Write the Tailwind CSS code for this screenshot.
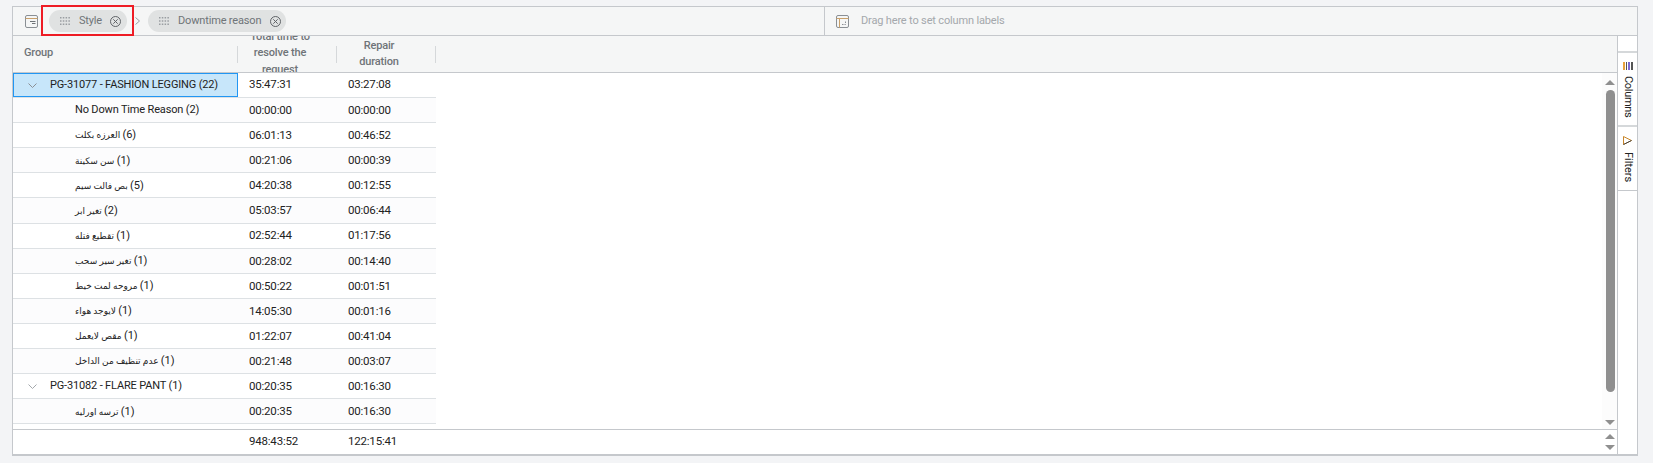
<!DOCTYPE html>
<html lang="en">

<head>
  <meta charset="UTF-8">
  <script src="https://cdn.jsdelivr.net/npm/@tailwindcss/browser@4"></script>
  <title>Downtime pivot</title>
</head>

<body class="bg-[#f3f4f6] h-[463px] overflow-hidden pt-[6px] pl-[12px] font-['Roboto','DejaVu_Sans',sans-serif] text-[11px] tracking-[-0.16px] text-[#222]">
  <div class="relative w-[1626px] h-[450px] border border-[#c5c8cc] border-b-2 bg-white flex flex-col">

    <!-- row group and column label bar -->
    <div class="h-[29px] shrink-0 flex border-b border-[#c5c8cc] bg-[#f5f6f6]">
      <div class="w-[812px] flex items-center pl-[12px] border-r border-[#c5c8cc]">
        <svg class="w-[13px] h-[13px]" viewBox="0 0 13 13" fill="none" stroke="#8a8f94">
          <rect x="0.5" y="0.5" width="12" height="12" rx="1.5" />
          <path d="M0.5 3.5h12" stroke="#c9a06a" />
          <path d="M5 6.500h5.500M7 8.500h3.500" stroke="#6f7478" />
        </svg>
        <div class="ml-[11px] w-[78px] h-[22px] rounded-full bg-[#e0e2e2] flex items-center pl-[11px] text-[#6f7478]">
          <svg class="w-[10px] h-[8px]" viewBox="0 0 10 8" fill="#9a9ea2">
            <path d="M0 0h1.500v1.500H0zM2.800 0h1.500v1.500H2.800zM5.600 0h1.500v1.500H5.600zM8.400 0h1.500v1.500H8.400zM0 3.200h1.500v1.500H0zM2.800 3.200h1.500v1.500H2.800zM5.600 3.200h1.500v1.500H5.600zM8.400 3.200h1.500v1.500H8.400zM0 6.400h1.500v1.500H0zM2.800 6.400h1.500v1.500H2.800zM5.600 6.400h1.500v1.500H5.600zM8.400 6.400h1.500v1.500H8.400z" />
          </svg>
          <span class="ml-[9px]">Style</span>
          <svg class="ml-[8px] w-[11px] h-[11px]" viewBox="0 0 11 11" fill="none" stroke="#5f6367">
            <circle cx="5.500" cy="5.500" r="5" />
            <path d="M3.300 3.300l4.400 4.400M7.700 3.300l-4.400 4.400" />
          </svg>
        </div>
        <svg class="mx-[8px] w-[5px] h-[8px]" viewBox="0 0 5 8" fill="none" stroke="#9a9ea2">
          <path d="M0.500 0.500L4.500 4L0.500 7.500" />
        </svg>
        <div class="w-[138px] h-[22px] rounded-full bg-[#e0e2e2] flex items-center pl-[11px] text-[#6f7478]">
          <svg class="w-[10px] h-[8px]" viewBox="0 0 10 8" fill="#9a9ea2">
            <path d="M0 0h1.500v1.500H0zM2.800 0h1.500v1.500H2.800zM5.600 0h1.500v1.500H5.600zM8.400 0h1.500v1.500H8.400zM0 3.200h1.500v1.500H0zM2.800 3.200h1.500v1.500H2.800zM5.600 3.200h1.500v1.500H5.600zM8.400 3.200h1.500v1.500H8.400zM0 6.400h1.500v1.500H0zM2.800 6.400h1.500v1.500H2.800zM5.600 6.400h1.500v1.500H5.600zM8.400 6.400h1.500v1.500H8.400z" />
          </svg>
          <span class="ml-[9px] whitespace-nowrap">Downtime reason</span>
          <svg class="ml-[9px] w-[11px] h-[11px] shrink-0" viewBox="0 0 11 11" fill="none" stroke="#5f6367">
            <circle cx="5.500" cy="5.500" r="5" />
            <path d="M3.300 3.300l4.400 4.400M7.700 3.300l-4.400 4.400" />
          </svg>
        </div>
      </div>
      <div class="flex-1 flex items-center pl-[11px] text-[#a4a8ac]">
        <svg class="w-[13px] h-[13px]" viewBox="0 0 13 13" fill="none" stroke="#8a8f94">
          <rect x="0.500" y="0.500" width="12" height="12" rx="1.500" />
          <path d="M0.500 3.500h12M3.500 3.500v9" stroke="#c9a06a" />
          <path d="M6 9.500h3.500V6" stroke-dasharray="1.500 1" />
        </svg>
        <span class="ml-[12px]">Drag here to set column labels</span>
      </div>
    </div>

    <div class="flex-1 flex min-h-0">
      <div class="flex-1 flex flex-col min-w-0">

        <!-- column headers -->
        <div class="h-[37px] shrink-0 flex items-center border-b border-[#c5c8cc] bg-[#f5f6f6] font-medium text-[#6f7478] leading-[16.5px]">
          <div class="w-[224px] pl-[11px] mb-[2px]">Group</div>
          <div class="w-[99px] h-[17px] flex items-center justify-center border-l border-[#d5d8da]">
            <div class="w-[99px] h-[36px] shrink-0 flex items-center justify-center text-center overflow-hidden pl-[5px] pr-[19px] mb-[1px]">Total time to resolve the request</div>
          </div>
          <div class="w-[99px] h-[17px] flex items-center justify-center border-l border-[#d5d8da] text-center pl-[13px] pr-[27px]">Repair duration</div>
          <div class="h-[17px] border-l border-[#d5d8da]"></div>
        </div>

        <!-- rows -->
        <div class="flex-1 min-h-0 flex overflow-hidden">
          <div class="w-[423px] shrink-0 overflow-hidden">
            <div class="h-[25.1px] flex items-center border-b border-[#dde1e4] bg-white">
              <div class="w-[225px] shrink-0 h-full flex items-center pl-[14px] bg-[#c7e6fa] border border-[#2196f3]">
                <svg class="w-[9px] h-[5px]" viewBox="0 0 9 5" fill="none" stroke="#8a8f94"><path d="M0.500 0.500L4.500 4.500L8.500 0.500" /></svg>
                <span class="ml-[13px] whitespace-nowrap">PG-31077 - FASHION LEGGING (22)</span>
              </div>
              <div class="w-[99px] pl-[11px] text-[11.5px] tracking-[-0.2px]">35:47:31</div>
              <div class="w-[99px] pl-[11px] text-[11.5px] tracking-[-0.2px]">03:27:08</div>
            </div>
            <div class="h-[25.1px] pt-[1px] flex items-center border-b border-[#dde1e4] bg-[#fcfcfd]">
              <div class="w-[225px] pl-[62px]">No Down Time Reason (2)</div>
              <div class="w-[99px] pl-[11px] text-[11.5px] tracking-[-0.2px]">00:00:00</div>
              <div class="w-[99px] pl-[11px] text-[11.5px] tracking-[-0.2px]">00:00:00</div>
            </div>
            <div class="h-[25.1px] pt-[1px] flex items-center border-b border-[#dde1e4] bg-white">
              <div class="w-[225px] pl-[62px] text-[9px]"><span dir="rtl">العرزه بكلت</span> <span class="text-[11px]">(6)</span></div>
              <div class="w-[99px] pl-[11px] text-[11.5px] tracking-[-0.2px]">06:01:13</div>
              <div class="w-[99px] pl-[11px] text-[11.5px] tracking-[-0.2px]">00:46:52</div>
            </div>
            <div class="h-[25.1px] pt-[1px] flex items-center border-b border-[#dde1e4] bg-[#fcfcfd]">
              <div class="w-[225px] pl-[62px] text-[9px]"><span dir="rtl">سن سكينة</span> <span class="text-[11px]">(1)</span></div>
              <div class="w-[99px] pl-[11px] text-[11.5px] tracking-[-0.2px]">00:21:06</div>
              <div class="w-[99px] pl-[11px] text-[11.5px] tracking-[-0.2px]">00:00:39</div>
            </div>
            <div class="h-[25.1px] pt-[1px] flex items-center border-b border-[#dde1e4] bg-white">
              <div class="w-[225px] pl-[62px] text-[9px]"><span dir="rtl">بص فالت سيم</span> <span class="text-[11px]">(5)</span></div>
              <div class="w-[99px] pl-[11px] text-[11.5px] tracking-[-0.2px]">04:20:38</div>
              <div class="w-[99px] pl-[11px] text-[11.5px] tracking-[-0.2px]">00:12:55</div>
            </div>
            <div class="h-[25.1px] pt-[1px] flex items-center border-b border-[#dde1e4] bg-[#fcfcfd]">
              <div class="w-[225px] pl-[62px] text-[9px]"><span dir="rtl">تغير ابر</span> <span class="text-[11px]">(2)</span></div>
              <div class="w-[99px] pl-[11px] text-[11.5px] tracking-[-0.2px]">05:03:57</div>
              <div class="w-[99px] pl-[11px] text-[11.5px] tracking-[-0.2px]">00:06:44</div>
            </div>
            <div class="h-[25.1px] pt-[1px] flex items-center border-b border-[#dde1e4] bg-white">
              <div class="w-[225px] pl-[62px] text-[9px]"><span dir="rtl">تقطيع فتله</span> <span class="text-[11px]">(1)</span></div>
              <div class="w-[99px] pl-[11px] text-[11.5px] tracking-[-0.2px]">02:52:44</div>
              <div class="w-[99px] pl-[11px] text-[11.5px] tracking-[-0.2px]">01:17:56</div>
            </div>
            <div class="h-[25.1px] pt-[1px] flex items-center border-b border-[#dde1e4] bg-[#fcfcfd]">
              <div class="w-[225px] pl-[62px] text-[9px]"><span dir="rtl">تغير سير سحب</span> <span class="text-[11px]">(1)</span></div>
              <div class="w-[99px] pl-[11px] text-[11.5px] tracking-[-0.2px]">00:28:02</div>
              <div class="w-[99px] pl-[11px] text-[11.5px] tracking-[-0.2px]">00:14:40</div>
            </div>
            <div class="h-[25.1px] pt-[1px] flex items-center border-b border-[#dde1e4] bg-white">
              <div class="w-[225px] pl-[62px] text-[9px]"><span dir="rtl">مروحه لمت خيط</span> <span class="text-[11px]">(1)</span></div>
              <div class="w-[99px] pl-[11px] text-[11.5px] tracking-[-0.2px]">00:50:22</div>
              <div class="w-[99px] pl-[11px] text-[11.5px] tracking-[-0.2px]">00:01:51</div>
            </div>
            <div class="h-[25.1px] pt-[1px] flex items-center border-b border-[#dde1e4] bg-[#fcfcfd]">
              <div class="w-[225px] pl-[62px] text-[9px]"><span dir="rtl">لايوجد هواء</span> <span class="text-[11px]">(1)</span></div>
              <div class="w-[99px] pl-[11px] text-[11.5px] tracking-[-0.2px]">14:05:30</div>
              <div class="w-[99px] pl-[11px] text-[11.5px] tracking-[-0.2px]">00:01:16</div>
            </div>
            <div class="h-[25.1px] pt-[1px] flex items-center border-b border-[#dde1e4] bg-white">
              <div class="w-[225px] pl-[62px] text-[9px]"><span dir="rtl">مقص لايعمل</span> <span class="text-[11px]">(1)</span></div>
              <div class="w-[99px] pl-[11px] text-[11.5px] tracking-[-0.2px]">01:22:07</div>
              <div class="w-[99px] pl-[11px] text-[11.5px] tracking-[-0.2px]">00:41:04</div>
            </div>
            <div class="h-[25.1px] pt-[1px] flex items-center border-b border-[#dde1e4] bg-[#fcfcfd]">
              <div class="w-[225px] pl-[62px] text-[9px]"><span dir="rtl">عدم تنظيف من الداخل</span> <span class="text-[11px]">(1)</span></div>
              <div class="w-[99px] pl-[11px] text-[11.5px] tracking-[-0.2px]">00:21:48</div>
              <div class="w-[99px] pl-[11px] text-[11.5px] tracking-[-0.2px]">00:03:07</div>
            </div>
            <div class="h-[25.1px] pt-[1px] flex items-center border-b border-[#dde1e4] bg-white">
              <div class="w-[225px] shrink-0 flex items-center pl-[15px]">
                <svg class="w-[9px] h-[5px]" viewBox="0 0 9 5" fill="none" stroke="#a4a8ac"><path d="M0.500 0.500L4.500 4.500L8.500 0.500" /></svg>
                <span class="ml-[13px] whitespace-nowrap">PG-31082 - FLARE PANT (1)</span>
              </div>
              <div class="w-[99px] pl-[11px] text-[11.5px] tracking-[-0.2px]">00:20:35</div>
              <div class="w-[99px] pl-[11px] text-[11.5px] tracking-[-0.2px]">00:16:30</div>
            </div>
            <div class="h-[25.1px] pt-[1px] flex items-center border-b border-[#dde1e4] bg-[#fcfcfd]">
              <div class="w-[225px] pl-[62px] text-[9px]"><span dir="rtl">ترسه اورليه</span> <span class="text-[11px]">(1)</span></div>
              <div class="w-[99px] pl-[11px] text-[11.5px] tracking-[-0.2px]">00:20:35</div>
              <div class="w-[99px] pl-[11px] text-[11.5px] tracking-[-0.2px]">00:16:30</div>
            </div>
            <div class="h-[6px] bg-white"></div>
          </div>

          <!-- vertical scrollbar -->
          <div class="ml-auto w-[15px] bg-[#fcfcfc] flex flex-col items-center pt-[7px] pb-[4px] pl-[1px]">
            <div class="w-0 h-0 border-x-[5px] border-x-transparent border-b-[5px] border-b-[#8f8f8f]"></div>
            <div class="mt-[5px] w-[9px] h-[302px] rounded-full bg-[#8f8f8f]"></div>
            <div class="mt-auto w-0 h-0 border-x-[5px] border-x-transparent border-t-[5px] border-t-[#8f8f8f]"></div>
          </div>
        </div>

        <!-- totals -->
        <div class="h-[25px] shrink-0 flex border-t border-[#c5c8cc] bg-white text-[11.5px] tracking-[-0.2px]">
          <div class="w-[423px] flex items-center">
            <div class="w-[225px]"></div>
            <div class="w-[99px] pl-[11px]">948:43:52</div>
            <div class="w-[99px] pl-[11px]">122:15:41</div>
          </div>
          <div class="ml-auto w-[15px] flex flex-col items-center justify-between py-[4px] pl-[1px]">
            <div class="w-0 h-0 border-x-[5px] border-x-transparent border-b-[5px] border-b-[#8f8f8f]"></div>
            <div class="w-0 h-0 border-x-[5px] border-x-transparent border-t-[5px] border-t-[#8f8f8f]"></div>
          </div>
        </div>
      </div>

      <!-- side tabs -->
      <div class="w-[20px] shrink-0 border-l border-[#c5c8cc] bg-white pt-[15px] text-[#222] tracking-normal">
        <div class="h-[76px] border-y-2 border-[#d5d8da] flex flex-col items-center pt-[9px]">
          <svg class="w-[10px] h-[8px]" viewBox="0 0 10 8">
            <path d="M0 0h2v8H0z" fill="#e8a33d" />
            <path d="M3 0h1v8H3z" fill="#555" />
            <path d="M5 0h2v8H5z" fill="#7c6bd6" />
            <path d="M8 0h2v8H8z" fill="#555" />
          </svg>
          <span class="mt-[6px] tracking-[-0.3px] [writing-mode:vertical-rl]">Columns</span>
        </div>
        <div class="h-[64px] border-b border-[#c5c8cc] flex flex-col items-center pt-[9px]">
          <svg class="w-[9px] h-[9px]" viewBox="0 0 9 9" fill="none">
            <path d="M0.500 0.500L8.500 4.500L0.500 8.500z" stroke="#c8862a" />
            <path d="M8.500 4.500L0.500 8.500" stroke="#444" />
          </svg>
          <span class="mt-[7px] [writing-mode:vertical-rl]">Filters</span>
        </div>
      </div>
    </div>

    <!-- red highlight around the Style chip -->
    <div class="absolute left-[28px] -top-[2px] w-[93px] h-[31px] border-2 border-[#ee1c25]"></div>
  </div>
</body>

</html>
